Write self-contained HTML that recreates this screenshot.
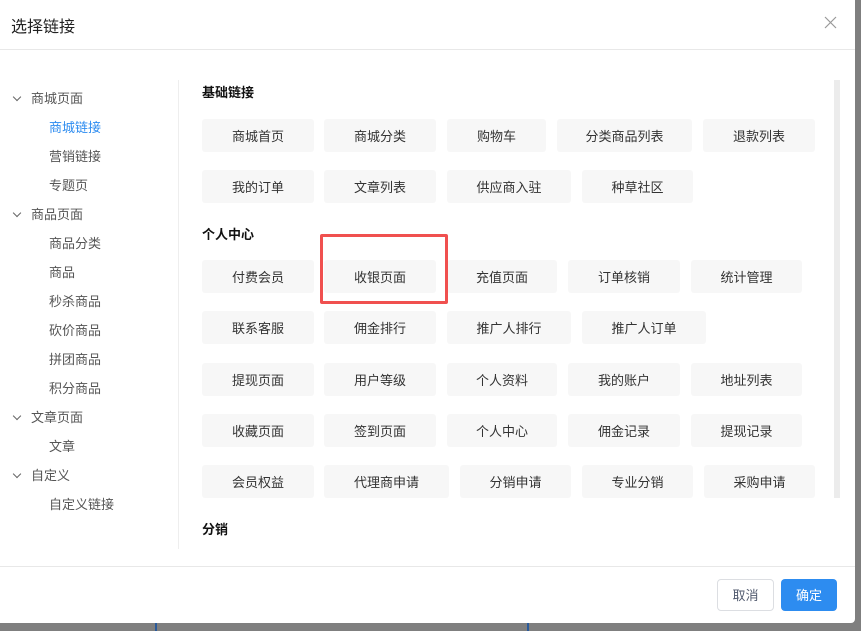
<!DOCTYPE html>
<html><head><meta charset="utf-8"><style>
*{margin:0;padding:0;box-sizing:border-box}
body{width:861px;height:631px;background:#7f7f7f;position:relative;overflow:hidden;font-family:"Liberation Sans","Noto Sans CJK SC",sans-serif}
.dlg{position:absolute;left:0;top:0;width:855px;height:623px;background:#fff;border-radius:0 0 4px 0}
.a{position:absolute;white-space:nowrap}
.b{position:absolute;height:33px;background:#f7f7f7;border-radius:3px;font-size:13px;color:#333;text-align:center;line-height:35px}
.h{position:absolute;font-size:13px;font-weight:bold;color:#111}
.s{position:absolute;font-size:13px;color:#555;line-height:18px}
.arr{position:absolute;width:6px;height:6px;border-right:1px solid #666;border-bottom:1px solid #666;transform:rotate(45deg)}
</style></head><body>
<div class="a" style="left:155px;top:622px;width:2px;height:9px;background:#2a5a9a"></div>
<div class="a" style="left:527px;top:622px;width:2px;height:9px;background:#2a5a9a"></div>
<div class="dlg">
<div class="a" style="left:11px;top:13px;font-size:16px;color:#222">选择链接</div>
<svg class="a" style="left:824px;top:16px" width="13" height="13"><path d="M1 1L12 12M12 1L1 12" stroke="#999" stroke-width="1.2"/></svg>
<div class="a" style="left:0;top:49px;width:855px;height:1px;background:#e8e8e8"></div>
<div class="a" style="left:178px;top:80px;width:1px;height:469px;background:#eee"></div>
<div class="a" style="left:834px;top:80px;width:6px;height:418px;background:#ececec"></div>

<div class="arr" style="left:14px;top:94px"></div><div class="s" style="left:31px;top:90px">商城页面</div>
<div class="s" style="left:49px;top:119px;color:#2d8cf0">商城链接</div>
<div class="s" style="left:49px;top:148px">营销链接</div>
<div class="s" style="left:49px;top:177px">专题页</div>
<div class="arr" style="left:14px;top:210px"></div><div class="s" style="left:31px;top:206px">商品页面</div>
<div class="s" style="left:49px;top:235px">商品分类</div>
<div class="s" style="left:49px;top:264px">商品</div>
<div class="s" style="left:49px;top:293px">秒杀商品</div>
<div class="s" style="left:49px;top:322px">砍价商品</div>
<div class="s" style="left:49px;top:351px">拼团商品</div>
<div class="s" style="left:49px;top:380px">积分商品</div>
<div class="arr" style="left:14px;top:413px"></div><div class="s" style="left:31px;top:409px">文章页面</div>
<div class="s" style="left:49px;top:438px">文章</div>
<div class="arr" style="left:14px;top:471px"></div><div class="s" style="left:31px;top:467px">自定义</div>
<div class="s" style="left:49px;top:496px">自定义链接</div>

<div class="h" style="left:202px;top:82px">基础链接</div>
<div class="b" style="left:202px;top:119px;width:112px">商城首页</div>
<div class="b" style="left:324px;top:119px;width:112px">商城分类</div>
<div class="b" style="left:447px;top:119px;width:99px">购物车</div>
<div class="b" style="left:557px;top:119px;width:135px">分类商品列表</div>
<div class="b" style="left:703px;top:119px;width:112px">退款列表</div>
<div class="b" style="left:202px;top:170px;width:112px">我的订单</div>
<div class="b" style="left:324px;top:170px;width:112px">文章列表</div>
<div class="b" style="left:447px;top:170px;width:124px">供应商入驻</div>
<div class="b" style="left:582px;top:170px;width:111px">种草社区</div>

<div class="h" style="left:202px;top:224px">个人中心</div>
<div class="b" style="left:202px;top:260px;width:112px">付费会员</div>
<div class="b" style="left:324px;top:260px;width:112px">收银页面</div>
<div class="b" style="left:447px;top:260px;width:110px">充值页面</div>
<div class="b" style="left:568px;top:260px;width:112px">订单核销</div>
<div class="b" style="left:691px;top:260px;width:111px">统计管理</div>
<div class="a" style="left:320px;top:234px;width:128px;height:70px;border:3px solid #f0504f;border-radius:2px"></div>
<div class="b" style="left:202px;top:311px;width:112px">联系客服</div>
<div class="b" style="left:324px;top:311px;width:112px">佣金排行</div>
<div class="b" style="left:447px;top:311px;width:124px">推广人排行</div>
<div class="b" style="left:582px;top:311px;width:124px">推广人订单</div>
<div class="b" style="left:202px;top:363px;width:112px">提现页面</div>
<div class="b" style="left:324px;top:363px;width:112px">用户等级</div>
<div class="b" style="left:447px;top:363px;width:110px">个人资料</div>
<div class="b" style="left:568px;top:363px;width:112px">我的账户</div>
<div class="b" style="left:691px;top:363px;width:111px">地址列表</div>
<div class="b" style="left:202px;top:414px;width:112px">收藏页面</div>
<div class="b" style="left:324px;top:414px;width:112px">签到页面</div>
<div class="b" style="left:447px;top:414px;width:110px">个人中心</div>
<div class="b" style="left:568px;top:414px;width:112px">佣金记录</div>
<div class="b" style="left:691px;top:414px;width:111px">提现记录</div>
<div class="b" style="left:202px;top:465px;width:112px">会员权益</div>
<div class="b" style="left:324px;top:465px;width:125px">代理商申请</div>
<div class="b" style="left:460px;top:465px;width:111px">分销申请</div>
<div class="b" style="left:582px;top:465px;width:111px">专业分销</div>
<div class="b" style="left:704px;top:465px;width:111px">采购申请</div>
<div class="h" style="left:202px;top:519px">分销</div>

<div class="a" style="left:0;top:566px;width:855px;height:1px;background:#e8e8e8"></div>
<div class="a" style="left:717px;top:579px;width:57px;height:32px;border:1px solid #dcdee2;border-radius:4px;font-size:13px;color:#515a6e;text-align:center;line-height:31px">取消</div>
<div class="a" style="left:781px;top:579px;width:56px;height:32px;background:#2d8cf0;border-radius:4px;font-size:13px;color:#fff;text-align:center;line-height:33px">确定</div>
</div>
</body></html>
